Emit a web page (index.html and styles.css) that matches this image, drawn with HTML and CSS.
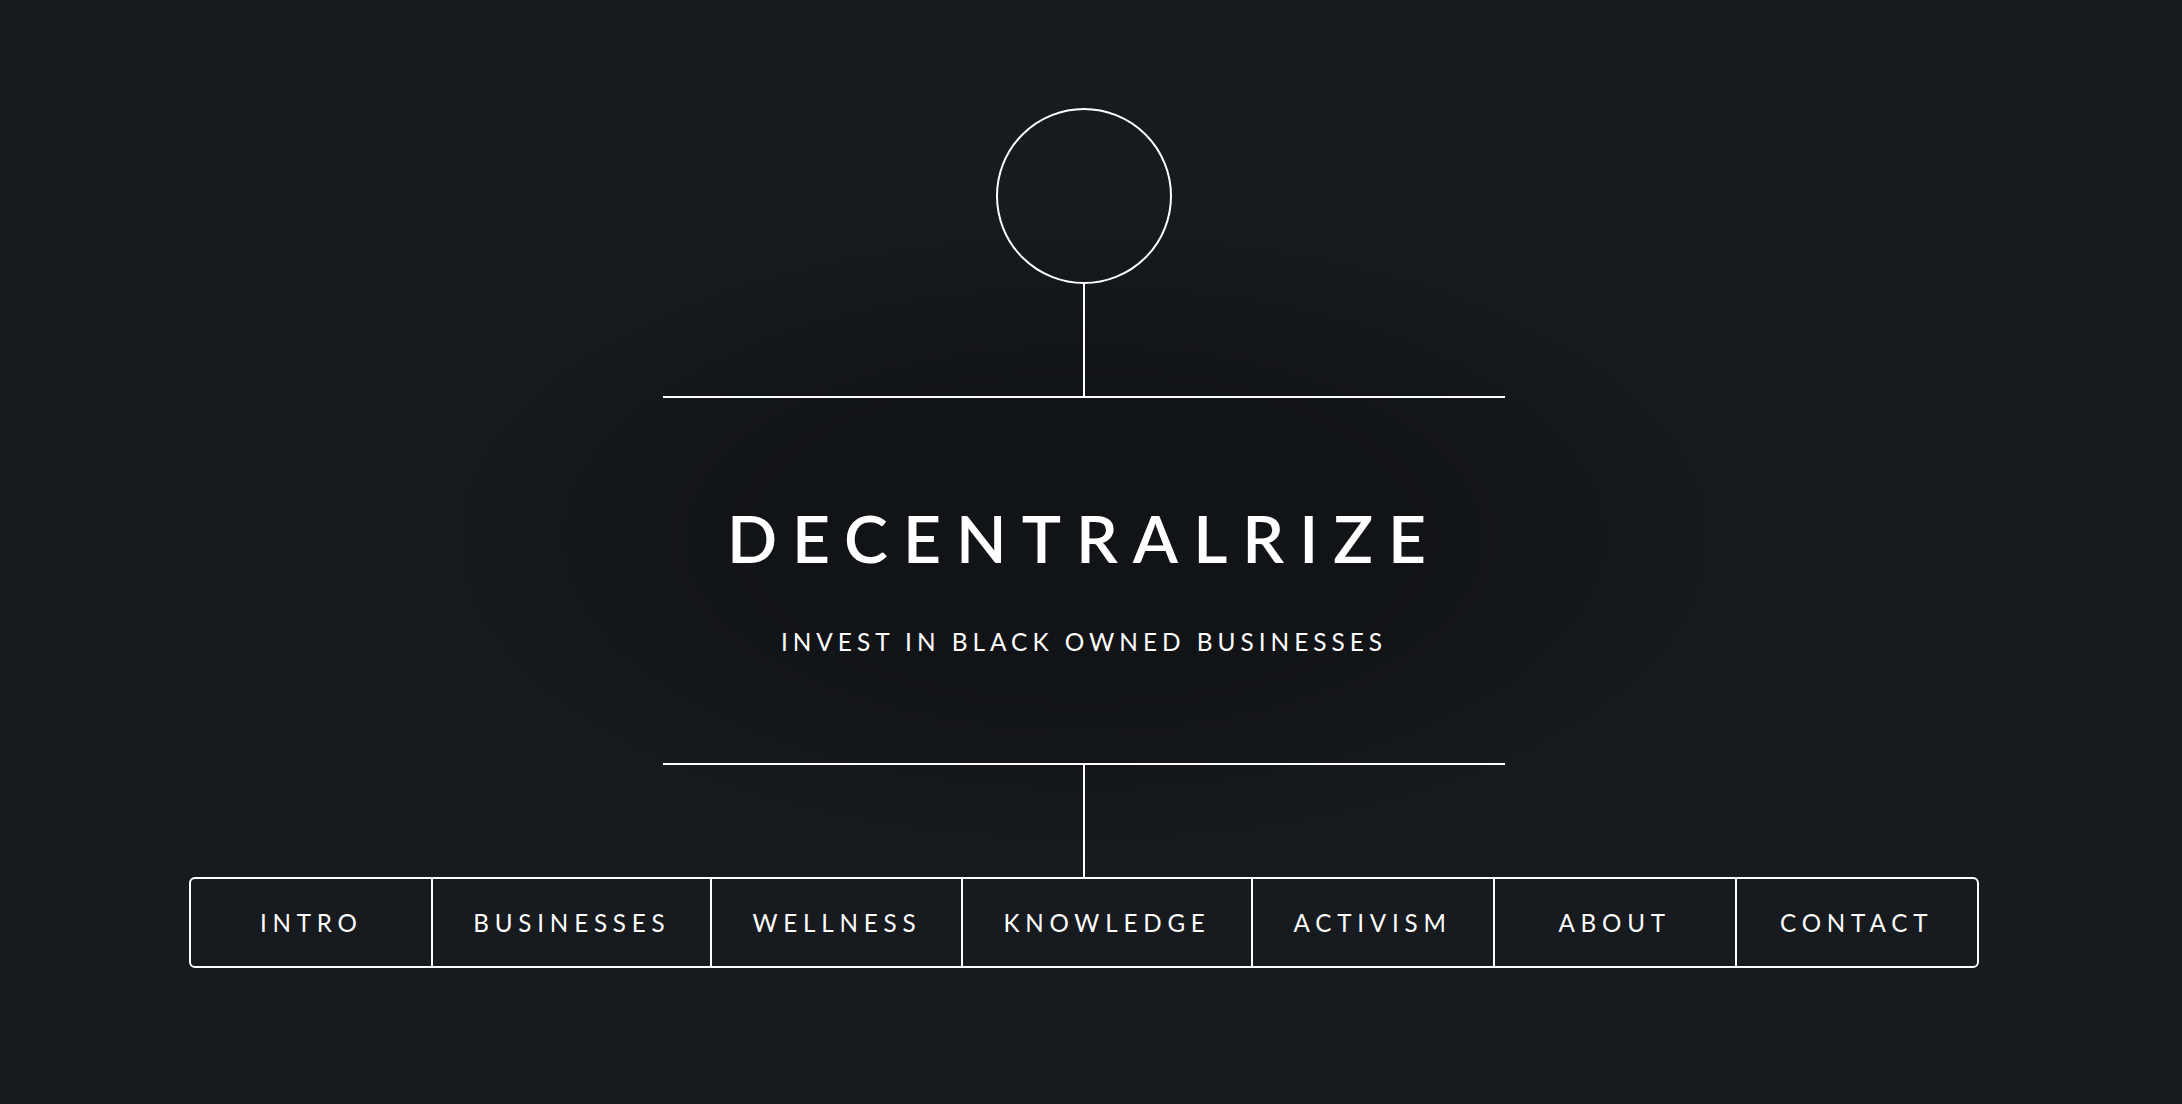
FILE: index.html
```html
<!DOCTYPE html>
<html lang="en">
<head>
<meta charset="utf-8">
<title>Decentralrize</title>
<link rel="stylesheet" href="styles.css">
</head>
<body>
<div class="wrapper">
  <header class="header">
    <div class="logo"></div>
    <div class="content">
      <div class="inner">
        <h1 class="title">Decentralrize</h1>
        <p class="tagline">Invest in Black Owned Businesses</p>
      </div>
    </div>
    <nav class="nav">
      <ul class="nav-list">
        <li class="nav-item"><a class="nav-link" href="#intro">Intro</a></li>
        <li class="nav-item"><a class="nav-link" href="#businesses">Businesses</a></li>
        <li class="nav-item"><a class="nav-link" href="#wellness">Wellness</a></li>
        <li class="nav-item"><a class="nav-link" href="#knowledge">Knowledge</a></li>
        <li class="nav-item"><a class="nav-link" href="#activism">Activism</a></li>
        <li class="nav-item"><a class="nav-link" href="#about">About</a></li>
        <li class="nav-item"><a class="nav-link" href="#contact">Contact</a></li>
      </ul>
    </nav>
  </header>
</div>
</body>
</html>
```

FILE: styles.css
```css
* { box-sizing: border-box; }

html, body {
  margin: 0;
  padding: 0;
  height: 100%;
}

body {
  background: #171a1e;
  color: #ffffff;
  font-family: "Lato", "Liberation Sans", sans-serif;
  font-weight: 400;
  overflow: hidden;
}

.wrapper {
  min-height: 1104px;
  display: flex;
  flex-direction: column;
  align-items: center;
  padding: 108px 14px 0 0;
}

.header {
  display: flex;
  flex-direction: column;
  align-items: center;
  text-align: center;
  background-image: radial-gradient(rgba(0, 0, 0, 0.25) 25%, rgba(0, 0, 0, 0) 55%);
}

.logo {
  width: 176px;
  height: 176px;
  border: 2px solid #ffffff;
  border-radius: 50%;
}

.content {
  position: relative;
  margin-top: 112px;
  border-top: 2px solid #ffffff;
  border-bottom: 2px solid #ffffff;
}

.content::before,
.nav::before {
  content: "";
  position: absolute;
  left: calc(50% - 1px);
  width: 2px;
  height: 114px;
  top: -114px;
  background: #ffffff;
}

.inner {
  padding: 93px 64px 96px;
}

.title {
  margin: 0 0 31px;
  font-size: 66px;
  line-height: 94px;
  font-weight: 600;
  letter-spacing: 15px;
  text-transform: uppercase;
}

.tagline {
  margin: 0;
  font-size: 24.4px;
  line-height: 51px;
  letter-spacing: 5px;
  text-transform: uppercase;
  font-weight: 400;
}

.nav {
  position: relative;
  margin-top: 112px;
}

.nav::before {
  top: -112px;
  height: 112px;
}

.nav-list {
  display: flex;
  list-style: none;
  margin: 0;
  padding: 0;
  border: 2px solid #ffffff;
  border-radius: 6px;
}

.nav-item {
  border-left: 2px solid #ffffff;
}

.nav-item:first-child {
  border-left: 0;
}

.nav-link {
  display: block;
  min-width: 240px;
  height: 87px;
  line-height: 87px;
  padding: 0 40px;
  font-size: 24.2px;
  font-weight: 400;
  letter-spacing: 5.8px;
  text-transform: uppercase;
  color: #ffffff;
  text-decoration: none;
}
```
